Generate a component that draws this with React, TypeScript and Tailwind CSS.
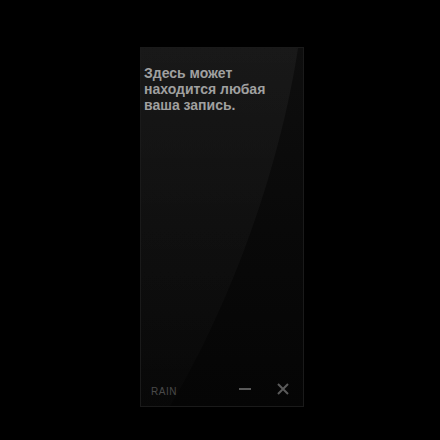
import React from "react";

export default function App() {
  return (
    <div className="w-[440px] h-[440px] bg-black flex items-start justify-center pt-[47px] pl-[4px]">
      <div
        className="relative w-[164px] h-[360px] border border-[#1a1a1a] flex flex-col overflow-hidden"
        style={{ background: "linear-gradient(180deg,#0e0e0e 0%,#090909 50%,#050505 100%)" }}
      >
        <svg className="absolute inset-0 pointer-events-none" width="164" height="360" viewBox="0 0 164 360">
          <defs>
            <linearGradient id="g" x1="0" y1="0" x2="0" y2="1">
              <stop offset="0" stopColor="#ffffff" stopOpacity="0.045" />
              <stop offset="0.6" stopColor="#ffffff" stopOpacity="0.025" />
              <stop offset="1" stopColor="#ffffff" stopOpacity="0.01" />
            </linearGradient>
          </defs>
          <path d="M0 0 L157 0 C145 80 110 220 28 360 L0 360 Z" fill="url(#g)" />
        </svg>
        <div
          className="relative pl-[3px] pt-[17px] text-[14px] leading-[16px] font-bold text-[#a0a0a0]"
          style={{ fontFamily: "'Liberation Sans', Arial, sans-serif" }}
        >
          Здесь может
          <br />
          находится любая
          <br />
          ваша запись.
        </div>
        <div className="flex-1" />
        <div className="relative h-[30px] flex items-center pl-[10px] pr-[14px] pb-[4px]">
          <span
            className="text-[10px] text-[#4a4a4a] tracking-[0.5px] mt-[4px]"
            style={{ fontFamily: "'Liberation Sans', Arial, sans-serif" }}
          >
            RAIN
          </span>
          <div className="flex-1" />
          <svg width="14" height="12" viewBox="0 0 14 12" className="mr-[25px]">
            <rect x="1" y="5" width="12" height="2" fill="#5a5a5a" />
          </svg>
          <svg width="12" height="12" viewBox="0 0 12 12">
            <path d="M1 1 L11 11 M11 1 L1 11" stroke="#5a5a5a" strokeWidth="2" />
          </svg>
        </div>
      </div>
    </div>
  );
}
